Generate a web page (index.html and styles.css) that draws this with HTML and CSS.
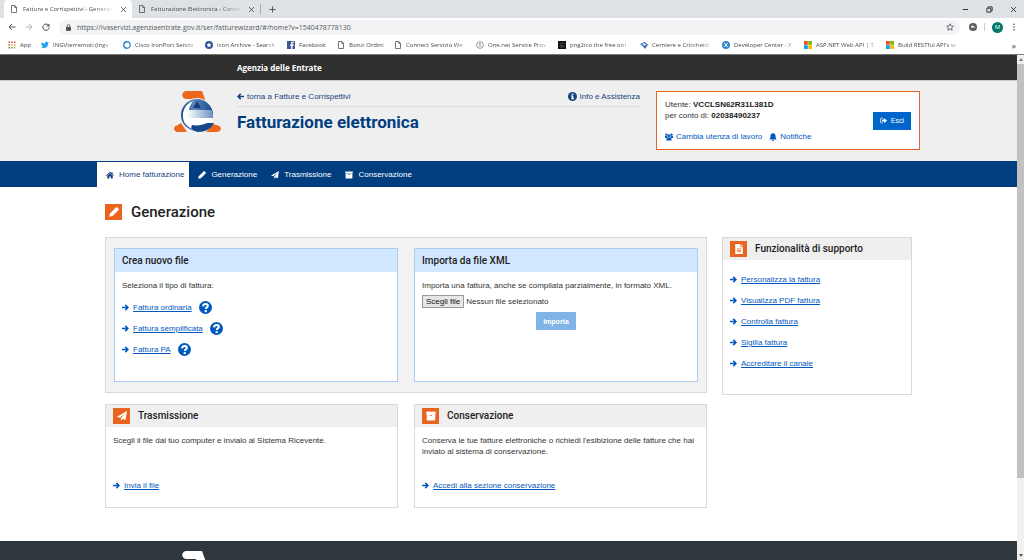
FILE: index.html
```html
<!DOCTYPE html>
<html lang="it">
<head>
<meta charset="utf-8">
<meta name="viewport" content="width=device-width, initial-scale=1">
<title>Fattura e Corrispettivi - Generazione</title>
<link rel="stylesheet" href="styles.css">
</head>
<body>
<svg class="sprite" aria-hidden="true">
  <symbol id="right" viewBox="0 0 16 16"><path d="M0 8h13M7.500 2L13.500 8l-6 6" fill="none" stroke="currentColor" stroke-width="3.600"/></symbol>
  <symbol id="left" viewBox="0 0 16 16"><path d="M16 8H3M8.500 2l-6 6 6 6" fill="none" stroke="currentColor" stroke-width="3.600"/></symbol>
  <symbol id="thin-left" viewBox="0 0 16 16"><path d="M15 8H2M8 2L2 8l6 6" fill="none" stroke="currentColor" stroke-width="1.800"/></symbol>
  <symbol id="thin-right" viewBox="0 0 16 16"><path d="M1 8h13M8 2l6 6-6 6" fill="none" stroke="currentColor" stroke-width="1.800"/></symbol>
  <symbol id="reload" viewBox="0 0 16 16"><path d="M13 4.500A6.300 6.300 0 1 0 14.300 9" fill="none" stroke="currentColor" stroke-width="2"/><path d="M15 .8V7H8.800z" fill="currentColor"/></symbol>
  <symbol id="lock" viewBox="0 0 16 16"><path d="M2.500 7h11v8.500h-11z" fill="currentColor"/><path d="M5 7V4.500a3 3 0 0 1 6 0V7" fill="none" stroke="currentColor" stroke-width="1.800"/></symbol>
  <symbol id="page" viewBox="0 0 16 16"><path d="M3 1h6.500L13 4.500V15H3zM9.500 1v4H13" fill="none" stroke="currentColor" stroke-width="1.500"/></symbol>
  <symbol id="close" viewBox="0 0 16 16"><path d="M2.500 2.500l11 11M13.500 2.500l-11 11" fill="none" stroke="currentColor" stroke-width="2"/></symbol>
  <symbol id="plus" viewBox="0 0 16 16"><path d="M8 1v14M1 8h14" fill="none" stroke="currentColor" stroke-width="2"/></symbol>
  <symbol id="minus" viewBox="0 0 16 16"><path d="M2 8h12" stroke="currentColor" stroke-width="2"/></symbol>
  <symbol id="restore" viewBox="0 0 16 16"><path d="M2 5h9v9H2zM5 5V2h9v9h-3" fill="none" stroke="currentColor" stroke-width="2"/></symbol>
  <symbol id="star" viewBox="0 0 16 16"><path d="M8 1.500l2 4.400 4.700.5-3.500 3.200 1 4.800L8 12l-4.200 2.400 1-4.800L1.300 6.400 6 5.900z" fill="none" stroke="currentColor" stroke-width="1.500"/></symbol>
  <symbol id="dots" viewBox="0 0 16 16"><circle cx="8" cy="2.500" r="1.600" fill="currentColor"/><circle cx="8" cy="8" r="1.600" fill="currentColor"/><circle cx="8" cy="13.500" r="1.600" fill="currentColor"/></symbol>
  <symbol id="ext" viewBox="0 0 16 16"><circle cx="8" cy="8" r="8" fill="#5a5a5a"/><path d="M3.500 7.500L7.500 4v2c3.500 0 5 2 5 4.500-1.200-1.500-2.500-1.800-5-1.800V11z" fill="#fff"/></symbol>
  <symbol id="apps" viewBox="0 0 16 16"><path d="M1 1h3v3H1zM6.500 1h3v3h-3zM12 1h3v3h-3zM1 6.500h3v3H1z" fill="#e0463a"/><path d="M6.500 6.500h3v3h-3zM12 6.500h3v3h-3z" fill="#e8a33a"/><path d="M1 12h3v3H1zM6.500 12h3v3h-3z" fill="#45a15a"/><path d="M12 12h3v3h-3z" fill="#e8b63a"/></symbol>
  <symbol id="bird" viewBox="0 0 16 16"><path d="M16 3.500l-1.700 1.700C14.400 10.500 10.600 14.500 5.500 14.500c-2 0-3.900-.5-5.500-1.500 1.900.2 3.500-.3 4.800-1.300-1.500-.1-2.600-1-3-2.300h1.400C1.600 9 .6 7.600.6 6l1.500.4C.6 5.300.200 3.500 1.100 2 2.800 4.100 5.200 5.300 7.900 5.400 7.300 2.500 10.800.4 13.200 2.600l2.100-.8-1.300 1.900z" fill="#1da1f2"/></symbol>
  <symbol id="ring" viewBox="0 0 16 16"><circle cx="8" cy="8" r="6.500" fill="none" stroke="#2483cf" stroke-width="2.600"/></symbol>
  <symbol id="badge" viewBox="0 0 16 16"><circle cx="8" cy="8" r="8" fill="#31559f"/><path d="M8 3l1.500 3.200 3.500.4-2.500 2.400.6 3.500L8 10.800l-3.100 1.700.6-3.500L3 6.600l3.500-.4z" fill="#fff"/></symbol>
  <symbol id="fb" viewBox="0 0 16 16"><path d="M0 0h16v16H0z" fill="#3b5998"/><path d="M14 3.500h-1.500c-1.300 0-1.500.5-1.500 1.500v2h3l-.4 2.600H11V16H8.300V9.600H6V7h2.300V4.700C8.300 2.300 9.600 1 12 1h2z" fill="#fff"/></symbol>
  <symbol id="info-ring" viewBox="0 0 16 16"><circle cx="8" cy="8" r="6.800" fill="none" stroke="#666" stroke-width="1.400"/><path d="M8 4v8M6.500 5.500H8" stroke="#666" stroke-width="1.600"/></symbol>
  <symbol id="black" viewBox="0 0 16 16"><path d="M0 0h16v16H0z" fill="#111"/><path d="M3 7c3-3 7-3 10-2M3 11c3 2 7 2 10 0M4 9h8" fill="none" stroke="#888"/></symbol>
  <symbol id="hinge" viewBox="0 0 16 16"><path d="M0 6l9-4 7 5-6 9-4-5z" fill="#3c69b5"/><path d="M3 6l6-2 4 3-4 3z" fill="#c7d8f2"/></symbol>
  <symbol id="dev" viewBox="0 0 16 16"><circle cx="8" cy="8" r="8" fill="#2b87d1"/><path d="M4.500 4l7 8M11.500 4l-7 8" stroke="#fff" stroke-width="2"/></symbol>
  <symbol id="ms" viewBox="0 0 16 16"><path d="M0 0h7.600v7.600H0z" fill="#f25022"/><path d="M8.400 0H16v7.600H8.400z" fill="#7fba00"/><path d="M0 8.400h7.600V16H0z" fill="#00a4ef"/><path d="M8.400 8.400H16V16H8.400z" fill="#ffb900"/></symbol>
  <symbol id="home" viewBox="0 0 16 16"><path d="M8 1.500l2.800 2.600V2.500h2.400v3.800L16 9l-1 1.200-7-6.300-7 6.300L0 9z" fill="currentColor"/><path d="M8 4.500l5.500 5V15h-4v-4h-3v4h-4V9.500z" fill="currentColor"/></symbol>
  <symbol id="pencil" viewBox="0 0 16 16"><path d="M11 .8a1.700 1.700 0 0 1 2.400 0l1.800 1.800a1.700 1.700 0 0 1 0 2.400L5.700 14.500.500 15.500l1-5.200z" fill="currentColor"/></symbol>
  <symbol id="plane" viewBox="0 0 16 16"><path d="M16 0l-2.400 14.500-4.900-2L6.200 16v-4.500L13 3.500 4.500 10.700 0 9z" fill="currentColor"/></symbol>
  <symbol id="archive" viewBox="0 0 16 16"><path d="M.5 1h15v3.800H.5z" fill="currentColor"/><path fill-rule="evenodd" d="M1.200 4.800h13.600V15H1.200zM6 6.500v1.200h4V6.500z" fill="currentColor"/></symbol>
  <symbol id="info" viewBox="0 0 16 16"><circle cx="8" cy="8" r="8" fill="currentColor"/><path d="M6.500 2.500h3v2.300h-3zM5.500 6h4v5h1.200v2h-5.200v-2h1.200V8H5.500z" fill="#fff"/></symbol>
  <symbol id="users" viewBox="0 0 16 16"><circle cx="8" cy="5.500" r="3" fill="currentColor"/><circle cx="3" cy="3.300" r="2.400" fill="currentColor"/><circle cx="13" cy="3.300" r="2.400" fill="currentColor"/><path d="M0 6h4l1 2.300-2 1.900H0zM16 6h-4l-1 2.300 2 1.900h3zM3 15v-3c0-2 1-3.200 2.700-3.200h4.600C12 8.800 13 10 13 12v3z" fill="currentColor"/></symbol>
  <symbol id="bell" viewBox="0 0 16 16"><path d="M8 0c.8 0 1.200.5 1.200 1.200C11.800 1.700 13 3.700 13 6c0 3.500 1 5 2.200 6.300V13H.8v-.7C2 11 3 9.500 3 6c0-2.300 1.200-4.300 3.800-4.800C6.800.500 7.200 0 8 0zM6 14h4a2 2 0 0 1-4 0z" fill="currentColor"/></symbol>
  <symbol id="exit" viewBox="0 0 16 16"><path d="M6.500 2.500H3a1.500 1.500 0 0 0-1.500 1.500v8A1.500 1.500 0 0 0 3 13.500h3.500" fill="none" stroke="currentColor" stroke-width="1.800"/><path d="M9.500 2L16 8l-6.500 6v-3.500H5v-5h4.500z" fill="currentColor"/></symbol>
  <symbol id="file" viewBox="0 0 16 16"><path fill-rule="evenodd" d="M2 0h7.500v4.500H14V16H2zM4.500 7v1.200h7V7zM4.500 9.500v1.200h7V9.500zM4.500 12v1.200h7V12z" fill="currentColor"/><path d="M10.500 0L14 3.500h-3.500z" fill="currentColor"/></symbol>
  <symbol id="help" viewBox="0 0 16 16"><circle cx="8" cy="8" r="8" fill="currentColor"/><path d="M5 6.500C5.200 4.500 6.400 3.700 8.100 3.700c1.600 0 2.800.8 2.800 2.200 0 1.900-2.600 2-2.600 4" fill="none" stroke="#fff" stroke-width="2.500"/><path d="M7 11.200h2.600v2.500H7z" fill="#fff"/></symbol>
</svg>

<div class="tabs">
  <div class="tab tab-active"><svg class="ico"><use href="#page"/></svg><span class="tab-name fade">Fattura e Corrispettivi - Generaz</span><button class="plain" aria-label="Chiudi scheda"><svg class="ico-s"><use href="#close"/></svg></button></div>
  <div class="tab"><svg class="ico"><use href="#page"/></svg><span class="tab-name fade">Fatturazione Elettronica - Conse</span><button class="plain" aria-label="Chiudi scheda"><svg class="ico-s"><use href="#close"/></svg></button></div>
  <button class="plain tab-new" aria-label="Nuova scheda"><svg class="ico-s"><use href="#plus"/></svg></button>
  <div class="window-buttons">
    <button class="plain" aria-label="Riduci"><svg class="ico-s"><use href="#minus"/></svg></button>
    <button class="plain" aria-label="Ripristina"><svg class="ico-s"><use href="#restore"/></svg></button>
    <button class="plain" aria-label="Chiudi"><svg class="ico-s"><use href="#close"/></svg></button>
  </div>
</div>
<div class="toolbar">
  <button class="plain" aria-label="Indietro"><svg class="ico"><use href="#thin-left"/></svg></button>
  <button class="plain dim" aria-label="Avanti"><svg class="ico"><use href="#thin-right"/></svg></button>
  <button class="plain" aria-label="Ricarica"><svg class="ico"><use href="#reload"/></svg></button>
  <div class="address">
    <svg class="ico-s"><use href="#lock"/></svg>
    <input class="url" type="text" aria-label="Indirizzo" value="https://ivaservizi.agenziaentrate.gov.it/ser/fatturewizard/#/home?v=1540478778130">
    <button class="plain" aria-label="Preferiti"><svg class="ico"><use href="#star"/></svg></button>
  </div>
  <div class="tools">
    <button class="plain" aria-label="Estensione"><svg class="ico"><use href="#ext"/></svg></button>
    <span class="divider"></span>
    <span class="avatar">M</span>
    <button class="plain" aria-label="Menu"><svg class="ico"><use href="#dots"/></svg></button>
  </div>
</div>
<nav class="bookmarks" aria-label="Preferiti">
  <a class="mark mark-app" href="#"><svg class="ico"><use href="#apps"/></svg><span>App</span></a>
  <a class="mark mark-long" href="#"><svg class="ico"><use href="#bird"/></svg><span class="fade">INGVterremoti (ingv</span></a>
  <a class="mark mark-long" href="#"><svg class="ico"><use href="#ring"/></svg><span class="fade">Cisco IronPort Sende</span></a>
  <a class="mark mark-long" href="#"><svg class="ico"><use href="#badge"/></svg><span class="fade">Icon Archive - Search</span></a>
  <a class="mark mark-short" href="#"><svg class="ico"><use href="#fb"/></svg><span>Facebook</span></a>
  <a class="mark mark-mid" href="#"><svg class="ico"><use href="#page"/></svg><span>Bonzi Ordini</span></a>
  <a class="mark mark-long" href="#"><svg class="ico"><use href="#page"/></svg><span class="fade">Connect Servizio We</span></a>
  <a class="mark mark-long" href="#"><svg class="ico"><use href="#info-ring"/></svg><span class="fade">One.net Service Prov</span></a>
  <a class="mark mark-long" href="#"><svg class="ico"><use href="#black"/></svg><span class="fade">png2ico the free onl</span></a>
  <a class="mark mark-long" href="#"><svg class="ico"><use href="#hinge"/></svg><span class="fade">Cerniere e Cricchetti</span></a>
  <a class="mark mark-long" href="#"><svg class="ico"><use href="#dev"/></svg><span class="fade">Developer Center - X</span></a>
  <a class="mark mark-long" href="#"><svg class="ico"><use href="#ms"/></svg><span class="fade">ASP.NET Web API | T</span></a>
  <a class="mark mark-long" href="#"><svg class="ico"><use href="#ms"/></svg><span class="fade">Build RESTful API's w</span></a>
  <button class="plain more" aria-label="Altri preferiti">»</button>
</nav>

<div class="viewport">
  <div class="site">
    <div class="topbar"><div class="wrap"><strong class="agency">Agenzia delle Entrate</strong></div></div>
    <header class="header">
      <div class="wrap header-row">
        <svg class="logo" viewBox="0 0 47 42" role="img" aria-label="Agenzia delle Entrate">
          <defs>
            <linearGradient id="lg" x1="0" x2="1"><stop offset="0" stop-color="#174a8e"/><stop offset=".4" stop-color="#5d86bb"/><stop offset="1" stop-color="#174a8e"/></linearGradient>
            <linearGradient id="lg2" x1="0" x2="1"><stop offset="0" stop-color="#fff"/><stop offset="1" stop-color="#6d92c4"/></linearGradient>
          </defs>
          <path d="M12 0h16l4 11H23l-1-3H12c-5-1-5-7 0-8z" fill="#ec671b"/>
          <path d="M7 32l6 9H4c-5 0-5-6-1-6.500zM39 33l5 1.500c4 1 4 6.500-1 6.500H32z" fill="#ec671b"/>
          <circle cx="23" cy="24" r="17" fill="#efefef"/>
          <circle cx="23" cy="24" r="16" fill="url(#lg)"/>
          <path d="M9 27C8 19 12 13 19 10c-3 4-4 8-5 12v5h6c1 4 6 6 12 5l-4 6c-10 2-18-3-19-11z" fill="#fff"/>
          <path d="M13 19h24c2 3 2 5 2 8H13z" fill="url(#lg2)"/>
          <path d="M19 27h20l-1 5-12 2c-4-1-7-4-7-7z" fill="#fff"/>
          <path d="M23 10l4 7h-8z" fill="#143e7c"/>
          <path d="M18 34c5 1 11 0 15-2h7c-3 6-9 9-16 9-5-1-8-4-6-7z" fill="#164789"/>
        </svg>
        <div class="heading">
          <div class="heading-links">
            <a class="icon-link navy" href="#"><svg class="ico-s"><use href="#left"/></svg>torna a Fatture e Corrispettivi</a>
            <a class="icon-link navy" href="#"><svg class="ico-m"><use href="#info"/></svg>Info e Assistenza</a>
          </div>
          <h1 class="title">Fatturazione elettronica</h1>
        </div>
        <section class="user">
          <div class="user-info">
            <p class="text">Utente: <b>VCCLSN62R31L381D</b><br>per conto di: <b>02038490237</b></p>
            <div class="user-links">
              <a class="icon-link" href="#"><svg class="ico"><use href="#users"/></svg>Cambia utenza di lavoro</a>
              <a class="icon-link" href="#"><svg class="ico"><use href="#bell"/></svg>Notifiche</a>
            </div>
          </div>
          <button class="btn"><svg class="ico-s"><use href="#exit"/></svg>Esci</button>
        </section>
      </div>
    </header>
    <nav class="nav">
      <div class="wrap nav-row">
        <a class="nav-item nav-active" href="#"><svg class="ico"><use href="#home"/></svg>Home fatturazione</a>
        <a class="nav-item" href="#"><svg class="ico"><use href="#pencil"/></svg>Generazione</a>
        <a class="nav-item" href="#"><svg class="ico"><use href="#plane"/></svg>Trasmissione</a>
        <a class="nav-item" href="#"><svg class="ico"><use href="#archive"/></svg>Conservazione</a>
      </div>
    </nav>
    <main class="wrap main">
      <h2 class="section-title"><span class="tile"><svg class="ico-l"><use href="#pencil"/></svg></span>Generazione</h2>
      <div class="columns">
        <div class="left">
          <div class="group">
            <section class="card card-blue">
              <h3 class="card-head">Crea nuovo file</h3>
              <div class="card-body">
                <p class="text">Seleziona il tipo di fattura:</p>
                <ul class="links">
                  <li class="link-row"><svg class="ico-s"><use href="#right"/></svg><a class="link" href="#">Fattura ordinaria</a><button class="plain help" aria-label="Aiuto fattura ordinaria"><svg class="ico-h"><use href="#help"/></svg></button></li>
                  <li class="link-row"><svg class="ico-s"><use href="#right"/></svg><a class="link" href="#">Fattura semplificata</a><button class="plain help" aria-label="Aiuto fattura semplificata"><svg class="ico-h"><use href="#help"/></svg></button></li>
                  <li class="link-row"><svg class="ico-s"><use href="#right"/></svg><a class="link" href="#">Fattura PA</a><button class="plain help" aria-label="Aiuto fattura PA"><svg class="ico-h"><use href="#help"/></svg></button></li>
                </ul>
              </div>
            </section>
            <section class="card card-blue">
              <h3 class="card-head">Importa da file XML</h3>
              <form class="card-body">
                <p class="text">Importa una fattura, anche se compilata parzialmente, in formato XML.</p>
                <div class="picker"><input class="hidden-input" type="file" id="xml"><label class="file-button" for="xml">Scegli file</label><span>Nessun file selezionato</span></div>
                <button class="btn btn-off" type="button" disabled>Importa</button>
              </form>
            </section>
          </div>
          <div class="pair">
            <section class="card">
              <h3 class="card-head"><span class="tile"><svg class="ico-l"><use href="#plane"/></svg></span>Trasmissione</h3>
              <div class="card-body card-foot">
                <p class="text">Scegli il file dal tuo computer e invialo al Sistema Ricevente.</p>
                <div class="link-row"><svg class="ico-s"><use href="#right"/></svg><a class="link" href="#">Invia il file</a></div>
              </div>
            </section>
            <section class="card">
              <h3 class="card-head"><span class="tile"><svg class="ico-l"><use href="#archive"/></svg></span>Conservazione</h3>
              <div class="card-body card-foot">
                <p class="text">Conserva le tue fatture elettroniche o richiedi l'esibizione delle fatture che hai inviato al sistema di conservazione.</p>
                <div class="link-row"><svg class="ico-s"><use href="#right"/></svg><a class="link" href="#">Accedi alla sezione conservazione</a></div>
              </div>
            </section>
          </div>
        </div>
        <aside class="card support">
          <h3 class="card-head"><span class="tile"><svg class="ico-l"><use href="#file"/></svg></span>Funzionalità di supporto</h3>
          <ul class="links card-body">
            <li class="link-row"><svg class="ico-s"><use href="#right"/></svg><a class="link" href="#">Personalizza la fattura</a></li>
            <li class="link-row"><svg class="ico-s"><use href="#right"/></svg><a class="link" href="#">Visualizza PDF fattura</a></li>
            <li class="link-row"><svg class="ico-s"><use href="#right"/></svg><a class="link" href="#">Controlla fattura</a></li>
            <li class="link-row"><svg class="ico-s"><use href="#right"/></svg><a class="link" href="#">Sigilla fattura</a></li>
            <li class="link-row"><svg class="ico-s"><use href="#right"/></svg><a class="link" href="#">Accreditare il canale</a></li>
          </ul>
        </aside>
      </div>
    </main>
    <footer class="footer">
      <div class="wrap footer-row">
        <svg class="logo" viewBox="0 0 47 42" aria-hidden="true"><path d="M12 0h16l4 11H23l-1-3H12c-5-1-5-7 0-8z" fill="#fff"/><circle cx="23" cy="25" r="15" fill="#fff"/></svg>
      </div>
    </footer>
  </div>
  <div class="scroll" aria-hidden="true"><span class="up"></span><span class="thumb"></span><span class="down"></span></div>
</div>
</body>
</html>
```
FILE: styles.css
```css
* { box-sizing: border-box; }
body {
  margin: 0;
  height: 100vh;
  display: flex;
  flex-direction: column;
  overflow: hidden;
  background: #fff;
  color: #333;
  font: 8px/11px "Liberation Sans", Arial, sans-serif;
}
h1, h2, h3, p, ul { margin: 0; padding: 0; }
ul { list-style: none; }
svg { display: block; flex: none; }
a { color: #0059bf; text-decoration: none; }
.sprite { position: absolute; width: 0; height: 0; }
.ico { width: 8px; height: 8px; }
.ico-s { width: 7px; height: 7px; }
.ico-m { width: 9px; height: 9px; }
.ico-l { width: 10px; height: 10px; }
.ico-h { width: 13px; height: 13px; }
.plain {
  display: flex;
  padding: 0;
  border: 0;
  background: none;
  color: inherit;
  font: inherit;
}
.dim { opacity: .45; }
.fade {
  flex: 1;
  white-space: nowrap;
  mask-image: linear-gradient(to right, #000 75%, transparent);
}

/* Browser frame */
.tabs, .toolbar, .bookmarks { flex: none; display: flex; align-items: center; height: 18px; color: #45484c; font-family: "Open Sans", "Noto Sans", sans-serif; }
.tabs { background: #dee1e6; padding-left: 4px; }
.tab { display: flex; align-items: center; gap: 5px; width: 128px; height: 18px; padding: 0 5px 0 6px; }
.tab-active { background: #fff; border-radius: 4px 4px 0 0; }
.tab-name { font-size: 6px; }
.tab-new { height: 10px; padding-left: 8px; align-items: center; border-left: 1px solid #a9acb1; }
.window-buttons { display: flex; gap: 17px; margin-left: auto; padding-right: 7px; color: #222; }
.toolbar { gap: 9px; padding: 0 6px 0 8px; }
.address { flex: 1; display: flex; align-items: center; gap: 5px; height: 15px; padding: 0 6px; border-radius: 8px; background: #f1f3f4; }
.url { flex: 1; min-width: 0; padding: 0; border: 0; outline: 0; background: none; color: #55585c; font: 7px/11px "Open Sans", "Noto Sans", sans-serif; }
.tools { display: flex; align-items: center; gap: 7px; }
.divider { width: 1px; height: 8px; background: #ccc; }
.avatar { width: 11px; height: 11px; border-radius: 50%; background: #00796b; color: #fff; font-size: 6px; text-align: center; }
.bookmarks { padding: 0 8px; font-size: 6px; }
.mark { display: flex; align-items: center; gap: 4px; flex: none; color: #45484c; white-space: nowrap; }
.mark-app { width: 33px; }
.mark-long { width: 82px; padding-right: 6px; }
.mark-short { width: 50px; }
.mark-mid { width: 57px; }
.more { margin-left: auto; font-size: 9px; }

/* Site frame */
.viewport { flex: 1; min-height: 0; display: flex; border-top: 1px solid #777; }
.site { flex: 1; min-width: 0; display: flex; flex-direction: column; overflow: hidden; }
.wrap { width: 100%; max-width: 823px; margin: 0 auto; }
.topbar { flex: none; padding: 7px 0; background: #303030; color: #fff; border-bottom: 1px solid #ccc; }
.agency { display: block; padding-left: 140px; font: 700 8px/11px "Open Sans", sans-serif; }
.header { flex: none; background: #efefef; padding: 10px 0 11px; }
.header-row { display: flex; gap: 16px; padding-left: 77px; }
.logo { width: 47px; height: 42px; }
.heading { flex: 1; }
.heading-links { display: flex; justify-content: space-between; padding-bottom: 4px; border-bottom: 1px solid #ddd; }
.icon-link { display: flex; align-items: center; gap: 3px; }
.navy { color: #17437f; }
.title { padding-top: 5px; color: #003e80; font: 700 17px/20px Roboto, sans-serif; }
.user { display: flex; align-items: center; justify-content: space-between; width: 264px; min-height: 59px; padding: 0 8px; border: 1px solid #e0662a; background: #fff; }
.user-info { display: grid; gap: 10px; }
.user-info b { color: #222; }
.user-links { display: flex; gap: 7px; }
.btn { display: flex; align-items: center; gap: 4px; height: 18px; padding: 0 7px; border: 0; background: #06c; color: #fff; font: 7px/11px "Liberation Sans", Arial, sans-serif; }
.nav { flex: none; background: #003e80; padding-top: 1px; }
.nav-row { display: flex; }
.nav-item { display: flex; align-items: center; gap: 5px; height: 25px; padding: 0 5px 0 9px; color: #fff; }
.nav-active { background: #fff; color: #17437f; }

/* Content */
.main { padding: 15px 8px 33px; }
.section-title { display: flex; align-items: center; gap: 9px; margin-bottom: 15px; color: #222; font: 500 15px/20px Roboto, sans-serif; }
.tile { display: flex; align-items: center; justify-content: center; width: 17px; height: 16px; background: #e9651f; color: #fff; }
.columns { display: grid; grid-template-columns: 602fr 190fr; gap: 15px; align-items: start; }
.left { display: grid; gap: 11px; }
.group { display: grid; grid-template-columns: 1fr 1fr; gap: 16px; padding: 10px 8px; border: 1px solid #d9d9d9; background: #f2f2f2; }
.pair { display: grid; grid-template-columns: 1fr 1fr; gap: 16px; }
.card { display: flex; flex-direction: column; min-height: 104px; border: 1px solid #d9d9d9; background: #fff; }
.card-head { display: flex; align-items: center; gap: 8px; height: 22px; padding: 0 7px; background: #efefef; color: #222; font: 500 10px/12px Roboto, sans-serif; }
.card-body { padding: 8px 7px; }
.card-blue { min-height: 134px; border-color: #a9cdf0; }
.card-blue .card-head { height: 23px; background: #d1e6ff; }
.links { display: grid; gap: 10px; }
.card-blue .links { padding-top: 11px; }
.link-row { display: flex; align-items: center; gap: 4px; height: 11px; color: #0059bf; }
.link { text-decoration: underline; }
.help { margin-left: 3px; }
.picker { display: flex; align-items: center; gap: 2px; margin: 4px 0; }
.hidden-input { position: absolute; opacity: 0; width: 1px; height: 1px; }
.file-button { padding: 0 3px; border: 1px solid #999; background: #e6e6e6; color: #111; }
.btn-off { margin: 0 auto; background: #80b3e6; font-weight: 700; }
.card-foot { flex: 1; display: flex; flex-direction: column; justify-content: space-between; padding-bottom: 16px; }
.support { min-height: 158px; }
.support .links { padding-top: 14px; }

.footer { flex: 1 0 auto; height: 19px; overflow: hidden; background: #30373d; }
.footer-row { padding: 10px 0 0 77px; }

/* Scroll bar */
.scroll { flex: none; display: flex; flex-direction: column; align-items: center; gap: 3px; width: 7px; padding: 3px 0; background: #f1f1f1; }
.thumb { flex: none; width: 100%; height: 83%; background: #c1c1c1; }
.up, .down { border: 2px solid transparent; }
.up { border-top: 0; border-bottom: 3px solid #777; }
.down { margin-top: auto; border-bottom: 0; border-top: 3px solid #555; }
```
